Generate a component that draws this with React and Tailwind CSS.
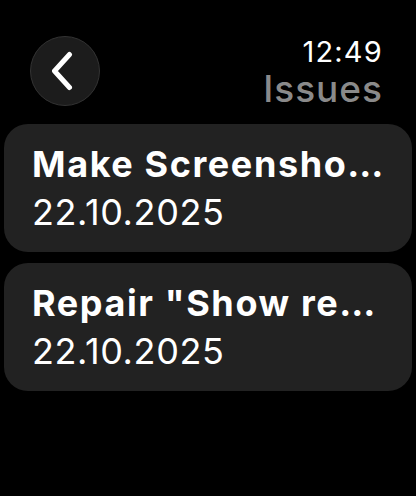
import React from 'react';

const issues = [
  { id: 1, title: 'Make Screensho…', date: '22.10.2025' },
  { id: 2, title: 'Repair "Show re…', date: '22.10.2025' },
];

const App = () => {
  return (
    <div className="w-[416px] h-[496px] bg-black text-white overflow-hidden" style={{ fontFamily: 'Inter, "Noto Sans", sans-serif' }}>
      {/* Header */}
      <div className="flex items-start justify-between pl-[30px] pr-[33px] pt-[36px]">
        <button className="flex h-[70px] w-[70px] items-center justify-center rounded-full border border-[#333333] bg-[#1c1c1c]" aria-label="Back">
          <svg width="24" height="40" viewBox="0 0 24 40" fill="none" className="-ml-[6px]">
            <path d="M19.5 3.5 L4.5 20 L19.5 36.5" stroke="white" strokeWidth="5" strokeLinecap="round" strokeLinejoin="round" />
          </svg>
        </button>
        <div className="flex flex-col items-end pt-[1px]">
          <span className="text-[29px] leading-[30px] font-normal tracking-[1.2px]">12:49</span>
          <span className="mt-[3px] text-[37px] leading-[38px] font-medium tracking-[1px] text-[#8a8a8a]">Issues</span>
        </div>
      </div>

      {/* List */}
      <div className="mt-[16px] flex flex-col gap-[11px] px-[4px]">
        {issues.map((issue) => (
          <div key={issue.id} className="flex h-[128px] flex-col justify-center rounded-[24px] bg-[#222222] px-[28px]">
            <div className="whitespace-nowrap text-[36px] leading-[48px] font-bold tracking-[1.6px]">{issue.title}</div>
            <div className="whitespace-nowrap text-[36px] leading-[48px] font-normal tracking-[0.6px]">{issue.date}</div>
          </div>
        ))}
      </div>
    </div>
  );
};

export default App;
